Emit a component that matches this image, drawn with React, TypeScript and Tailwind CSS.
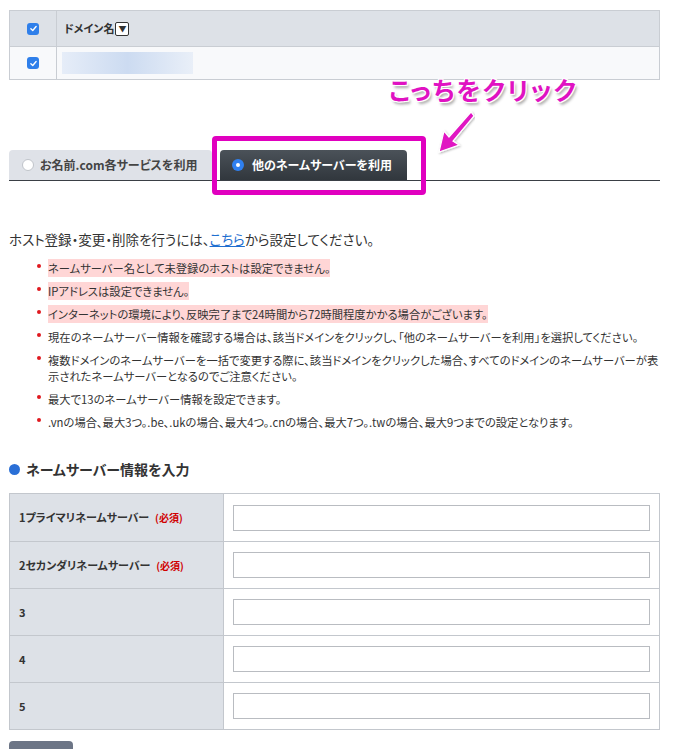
import React from "react";

const notes = [
  { text: "ネームサーバー名として未登録のホストは設定できません。", mark: true },
  { text: "IPアドレスは設定できません。", mark: true },
  { text: "インターネットの環境により、反映完了まで24時間から72時間程度かかる場合がございます。", mark: true },
  { text: "現在のネームサーバー情報を確認する場合は、該当ドメインをクリックし、「他のネームサーバーを利用」を選択してください。", mark: false },
  { text: "複数ドメインのネームサーバーを一括で変更する際に、該当ドメインをクリックした場合、すべてのドメインのネームサーバーが表示されたネームサーバーとなるのでご注意ください。", mark: false },
  { text: "最大で13のネームサーバー情報を設定できます。", mark: false },
  { text: ".vnの場合、最大3つ。.be、.ukの場合、最大4つ。.cnの場合、最大7つ。.twの場合、最大9つまでの設定となります。", mark: false },
];

const servers = [
  { label: "1プライマリネームサーバー", required: true },
  { label: "2セカンダリネームサーバー", required: true },
  { label: "3", required: false },
  { label: "4", required: false },
  { label: "5", required: false },
];

function Check() {
  return (
    <span className="inline-flex h-[12px] w-[12px] items-center justify-center rounded-[3px] bg-[#2f7fea]">
      <svg viewBox="0 0 12 12" className="h-[9px] w-[9px]">
        <path d="M2.5 6.2 L5 8.6 L9.5 3.4" fill="none" stroke="#fff" strokeWidth="1.8" strokeLinecap="round" strokeLinejoin="round" />
      </svg>
    </span>
  );
}

export default function App() {
  return (
    <div className="min-h-screen bg-white px-[9px] pt-[10px] font-['Noto_Sans_CJK_JP','Noto_Sans',sans-serif] text-[#333] [font-feature-settings:'palt']">
      <div className="w-[651px]">
        {/* domain table */}
        <div className="border border-[#c9cdd3]">
          <div className="flex h-[35px] bg-[#dde1e7]">
            <div className="flex w-[47px] items-center justify-center border-r border-[#c9cdd3]">
              <Check />
            </div>
            <div className="flex items-center pl-[7px] text-[11px] font-bold">
              ドメイン名
              <span className="ml-[1px] inline-flex h-[14px] w-[14px] items-center justify-center rounded-[2px] border border-[#333] bg-white text-[8px] leading-none">
                ▼
              </span>
            </div>
          </div>
          <div className="flex h-[33px] border-t border-[#c9cdd3] bg-[#f8f9fb]">
            <div className="flex w-[47px] items-center justify-center border-r border-[#c9cdd3]">
              <Check />
            </div>
            <div className="flex items-center pl-[5px]">
              <div className="h-[22px] w-[131px] bg-gradient-to-r from-[#e6edf8] via-[#ccdbf1] to-[#e9eff8]" />
            </div>
          </div>
        </div>

        {/* tabs */}
        <div className="relative h-[101px]">
          <div className="absolute left-[380px] top-[-6px] text-[25px] font-bold leading-[30px] tracking-[2px] text-[#e012c2] [text-shadow:0_0_2px_#fff,1px_1px_0_#fff,-1px_-1px_0_#fff,1px_-1px_0_#fff,-1px_1px_0_#fff,2px_3px_3px_rgba(0,0,0,0.35)]">
            こっちをクリック
          </div>
          <svg className="absolute left-[424px] top-[30px]" width="42" height="46" viewBox="0 0 42 46">
            <defs>
              <filter id="sh" x="-20%" y="-20%" width="150%" height="150%">
                <feDropShadow dx="1" dy="1" stdDeviation="1" floodOpacity="0.3" />
              </filter>
            </defs>
            <path d="M38 2 L16 27 L11 21 L6 42 L26 35 L20 31 L41 6 Z" fill="#e012c2" stroke="#fff" strokeWidth="1.2" filter="url(#sh)" />
          </svg>

          <div className="absolute bottom-0 left-0 right-0 flex items-end gap-[8px] border-b border-[#3a3f45]">
            <div className="flex h-[30px] w-[203px] items-center gap-[6px] rounded-t-[4px] bg-[#dfe2e8] pl-[13px] text-[12px] font-bold text-[#444]">
              <span className="h-[12px] w-[12px] rounded-full border border-[#c0c4ca] bg-white" />
              お名前.com各サービスを利用
            </div>
            <div className="flex h-[30px] w-[187px] items-center gap-[8px] rounded-t-[4px] bg-gradient-to-b from-[#4b5259] to-[#31373d] pl-[12px] text-[12px] font-bold text-white">
              <span className="flex h-[12px] w-[12px] items-center justify-center rounded-full bg-[#2f80f0]">
                <span className="h-[4px] w-[4px] rounded-full bg-white" />
              </span>
              他のネームサーバーを利用
            </div>
          </div>
          <div className="absolute left-[203px] top-[56px] h-[59px] w-[214px] rounded-[4px] border-[5px] border-[#e000bf]" />
        </div>

        {/* notes */}
        <p className="mt-[49px] text-[13.5px] leading-[18px]">
          ホスト登録・変更・削除を行うには、
          <a href="#" className="text-[#1f6fd0] underline">こちら</a>
          から設定してください。
        </p>
        <ul className="mt-[12px] pl-[28px]">
          {notes.map((n) => (
            <li key={n.text} className="relative mb-[7px] pl-[11px] text-[11.3px] leading-[16px]">
              <span className="absolute left-0 top-[4px] h-[4px] w-[4px] rounded-full bg-[#e0191f]" />
              {n.mark ? <span className="bg-[#ffd6d6] py-[1px]">{n.text}</span> : n.text}
            </li>
          ))}
        </ul>

        {/* form */}
        <h2 className="mt-[29px] flex items-center gap-[6px] text-[14px] font-bold leading-[20px]">
          <span className="h-[11px] w-[11px] rounded-full bg-[#2a6fd6]" />
          ネームサーバー情報を入力
        </h2>
        <div className="mt-[14px] border border-[#c3c7cd]">
          {servers.map((s, i) => (
            <div key={s.label} className={`flex h-[47px] ${i > 0 ? "border-t border-[#c3c7cd]" : ""}`}>
              <div className="flex w-[214px] items-center border-r border-[#c3c7cd] bg-[#dde1e7] pl-[9px] text-[11px] font-bold">
                {s.label}
                {s.required && <span className="ml-[6px] text-[10px] text-[#d00000]">(必須)</span>}
              </div>
              <div className="flex flex-1 items-center px-[9px]">
                <input className="h-[26px] w-full border border-[#b9bcc1] bg-white px-2 text-[12px] outline-none" />
              </div>
            </div>
          ))}
        </div>
        <button className="mt-[11px] h-[26px] w-[64px] rounded-[4px] bg-[#6c7586] text-[11px] font-bold text-white">
          戻る
        </button>
      </div>
    </div>
  );
}
